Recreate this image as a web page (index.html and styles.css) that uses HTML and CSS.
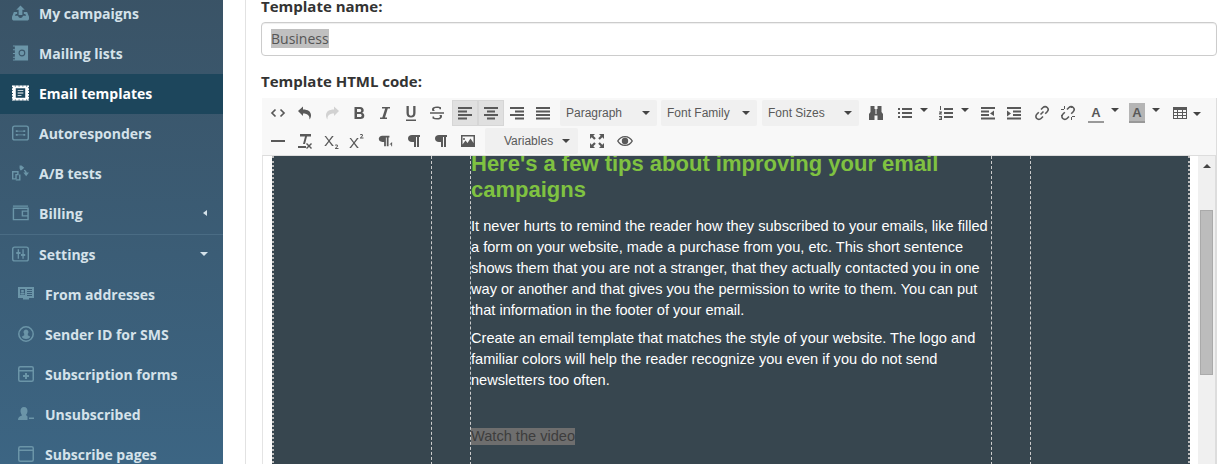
FILE: index.html
```html
<!DOCTYPE html>
<html lang="en">
<head>
<meta charset="utf-8">
<title>Email templates</title>
<link rel="stylesheet" href="styles.css">
</head>
<body>
<div class="page">
  <nav class="sidebar">
    <a class="item"><svg class="ico" viewBox="0 0 18 16"><path d="M9 0l4.500 4.500H11V10H7V4.500H4.500z"/><path d="M2 7h3.500v2H4L3 11h3.500c0 1.200 1 2.200 2.500 2.200s2.500-1 2.500-2.200H15l-1-2h-1.500V7H16l2 5v2c0 1-1 2-2 2H2c-1 0-2-1-2-2v-2z"/></svg><span>My campaigns</span></a>
    <a class="item"><svg class="ico" viewBox="0 0 18 16"><path d="M1 0h16v16H1v-1h2v-2H1v-1h2V9H1V8h2V5H1V4h2V1H1z"/><circle cx="10.500" cy="8" r="3" fill="none" stroke="#3c586b" stroke-width="1.200"/></svg><span>Mailing lists</span></a>
    <a class="item active"><svg class="ico" viewBox="0 0 18 16"><path d="M0 0h18v16H0z"/><path fill="#1d465c" d="M4 3h10v10H4zM0 2h1v1H0zM0 5h1v1H0zM0 8h1v1H0zM0 11h1v1H0zM0 14h1v1H0zM17 2h1v1h-1zM17 5h1v1h-1zM17 8h1v1h-1zM17 11h1v1h-1zM17 14h1v1h-1zM3 0h1v1H3zM7 0h1v1H7zM11 0h1v1h-1zM15 0h1v1h-1zM3 15h1v1H3zM7 15h1v1H7zM11 15h1v1h-1zM15 15h1v1h-1z"/><path d="M6 5h6v1H6zM6 7.500h6v1H6zM6 10h4v1H6z"/></svg><span>Email templates</span></a>
    <a class="item"><svg class="ico" viewBox="0 0 18 16"><rect x=".75" y=".75" width="16.500" height="14.500" rx="2" fill="none" stroke="currentColor" stroke-width="1.500"/><path d="M4 5h2v2H4zM6 5.500h6v1H6zM12 5h2v2h-2zM4 9h2v2H4zM6 9.500h6v1H6zM12 9h2v2h-2z"/></svg><span>Autoresponders</span></a>
    <a class="item"><svg class="ico" viewBox="0 0 18 16"><path fill-rule="evenodd" d="M0 6h7v4.500h-2V15H0zM1.500 7.500V13.500h2V9H5.500V7.500zM6 11h1.500V9.500H9V16H4v-1.500h3.500V11zM8 0h2l3 2.500L10 5H8.500V3.500H8zM13 4.500c1.500.5 2.500 1.500 2.500 3H18l-3 4-3-4h2c0-.8-.5-1.300-1.500-1.500z"/></svg><span>A/B tests</span></a>
    <a class="item"><svg class="ico" viewBox="0 0 18 16"><path fill="none" stroke="currentColor" stroke-width="1.500" d="M17 3H1.500v12h15.500V3zM1 .75h16M17 6h-6v5h6"/></svg><span>Billing</span><i class="caret-left"></i></a>
    <a class="item settings"><svg class="ico" viewBox="0 0 18 16"><rect x=".75" y=".75" width="16.500" height="14.500" rx="2" fill="none" stroke="currentColor" stroke-width="1.500"/><path d="M6 3h1.400v3H9v2H7.400v5H6V8H4.500V6H6zM11 3h1.400v5H14v2h-1.600v3H11v-3H9.500V8H11z"/></svg><span>Settings</span><i class="caret-down"></i></a>
    <a class="item sub"><svg class="ico" viewBox="0 0 16 14"><path d="M0 0h16v11h-5v1.500H5V11H0z"/><path fill="#3b5d77" d="M2 2h5v6H2zM9 2h5v1H9zM9 4h5v1H9zM9 6h5v1H9zM9 8h5v1H9z"/><path d="M3.200 3h2.600v2.500H3.200zM2.500 6h4v1.500h-4z"/></svg><span>From addresses</span></a>
    <a class="item sub"><svg class="ico" viewBox="0 0 16 16"><circle cx="8" cy="8" r="7.200" fill="none" stroke="currentColor" stroke-width="1.500"/><path d="M8 3.500a2.500 2.500 0 0 1 1.800 4.200v1.500l2.500 1.500C11.500 12 10 13 8 13s-3.500-1-4.300-2.300l2.500-1.500V7.700A2.500 2.500 0 0 1 8 3.500z"/></svg><span>Sender ID for SMS</span></a>
    <a class="item sub"><svg class="ico" viewBox="0 0 16 16"><rect x=".75" y=".75" width="14.500" height="14.500" rx="1.500" fill="none" stroke="currentColor" stroke-width="1.500"/><path d="M1 4h14v1.500H1zM7 7h2v2h2v2H9v2H7v-2H5V9h2z"/></svg><span>Subscription forms</span></a>
    <a class="item sub"><svg class="ico" viewBox="0 0 16 16"><path d="M6 1c2.500 0 3.500 2 3.500 4S8.500 8 8 9l1.500 1.500V14H0c0-2.500 1-3.500 4-4.500C3.500 8 2.500 7 2.500 5S3.500 1 6 1zM11 11.500h5V13h-5z"/></svg><span>Unsubscribed</span></a>
    <a class="item sub"><svg class="ico" viewBox="0 0 16 16"><rect x=".75" y=".75" width="14.500" height="14.500" rx="1.500" fill="none" stroke="currentColor" stroke-width="1.500"/><path d="M1 3.500h14V5H1z"/></svg><span>Subscribe pages</span></a>
  </nav>
  <main class="content">
    <label class="field-label">Template name:</label>
    <div class="name-input"><span class="selected">Business</span></div>
    <label class="field-label second">Template HTML code:</label>
    <div class="editor">
      <div class="toolbar">
        <div class="row">
          <button class="b"><svg viewBox="0 0 16 16"><path class="ln" d="M5.500 4.500L2 8l3.500 3.500M10.500 4.500L14 8l-3.500 3.500"/></svg></button>
          <button class="b g1"><svg viewBox="0 0 16 16"><path d="M1 6l5-4.500v3c5 0 8 2 8 6 0 1.500-.7 3-1.500 4 .3-3.500-1.500-6-6.500-6v2.500z"/></svg></button>
          <button class="b g1 off"><svg viewBox="0 0 16 16"><path d="M15 6l-5-4.500v3c-5 0-8 2-8 6 0 1.500.7 3 1.500 4C3.200 11 5 8.500 10 8.500V11z"/></svg></button>
          <button class="b g1"><svg viewBox="0 0 16 16"><path fill-rule="evenodd" d="M3.500 2H9c2.500 0 3.700 1.300 3.700 3.200 0 1.300-.7 2.200-1.700 2.600 1.500.4 2.300 1.500 2.300 3 0 2.200-1.500 3.200-4 3.200H3.500zM6 4v3h2.700C9.700 7 10.200 6.400 10.200 5.500S9.700 4 8.700 4zM6 9v3h3c1.100 0 1.700-.6 1.700-1.500S10.100 9 9 9z"/></svg></button>
          <button class="b"><svg viewBox="0 0 16 16"><path d="M5 2h8v1.500h-2.200L8 12.500h2V14H3v-1.500h2.300L8.200 3.500H5z"/></svg></button>
          <button class="b"><svg viewBox="0 0 16 16"><path d="M3 14.500h10V16H3zM3.500 1h2.300v7c0 1.700.8 2.700 2.200 2.700s2.200-1 2.200-2.700V1h2.300v7c0 3-1.700 4.500-4.500 4.500S3.500 11 3.500 8z"/></svg></button>
          <button class="b"><svg viewBox="0 0 16 16"><path d="M1 7.300h14v1.400H1zM3.500 6c-.3-.5-.5-1-.5-1.700C3 2.500 5 1.500 8 1.500c1.500 0 3 .3 4 .8v2h-1.500l-.2-1C9.700 3 9 3 8 3 6.200 3 5 3.400 5 4.400c0 .7.500 1.200 1.200 1.600zM12.700 10c.2.400.3.800.3 1.400 0 2-2 3.100-5 3.100-1.700 0-3.200-.3-4.500-1v-2H5l.3 1.200c.8.300 1.700.4 2.700.4 1.800 0 3-.5 3-1.600 0-.6-.3-1.100-.8-1.500z"/></svg></button>
          <button class="b on g2"><svg viewBox="0 0 16 16"><path d="M1 2h14v2H1zM1 5.500h9v2H1zM1 9h14v2H1zM1 12.500h9v2H1z"/></svg></button>
          <button class="b on"><svg viewBox="0 0 16 16"><path d="M1 2h14v2H1zM4 5.500h8v2H4zM1 9h14v2H1zM4 12.500h8v2H4z"/></svg></button>
          <button class="b"><svg viewBox="0 0 16 16"><path d="M1 2h14v2H1zM6 5.500h9v2H6zM1 9h14v2H1zM6 12.500h9v2H6z"/></svg></button>
          <button class="b"><svg viewBox="0 0 16 16"><path d="M1 2h14v2H1zM1 5.500h14v2H1zM1 9h14v2H1zM1 12.500h14v2H1z"/></svg></button>
          <button class="sel g4 w97"><span>Paragraph</span><i class="dn"></i></button>
          <button class="sel g4 w96"><span>Font Family</span><i class="dn"></i></button>
          <button class="sel g5 w97"><span>Font Sizes</span><i class="dn"></i></button>
          <button class="b g4"><svg viewBox="0 0 16 16"><path d="M2.500 1H6.500V4H7.500V9H8.500V4H9.500V1h4v6L15 9v6H9.500V10.500h-3V15H1V9l1.500-2z"/></svg></button>
          <button class="b w40 g3"><svg viewBox="0 0 16 16"><path d="M1 3h2v2H1zM5 3h10v2H5zM1 7h2v2H1zM5 7h10v2H5zM1 11h2v2H1zM5 11h10v2H5z"/></svg><i class="up"></i></button>
          <button class="b w40 g1"><svg viewBox="0 0 16 16"><path d="M2 1h1v4H2zM1 6.500h3v1l-1.500 1H4v1H1v-1l1.500-1H1zM1 11h3v4H1v-1h2v-.5H1.500v-1H3V12H1zM6 3h9v2H6zM6 7h9v2H6zM6 11h9v2H6z"/></svg><i class="up"></i></button>
          <button class="b g2"><svg viewBox="0 0 16 16"><path d="M1 2h14v2H1zM1 5.500h8v2H1zM1 9h8v2H1zM1 12.500h14v2H1zM10 8.500l4-3v5.500z"/></svg></button>
          <button class="b"><svg viewBox="0 0 16 16"><path d="M1 2h14v2H1zM7 5.500h8v2H7zM7 9h8v2H7zM1 12.500h14v2H1zM1 5.500l4 3-4 3z"/></svg></button>
          <button class="b g2"><svg viewBox="0 0 16 16"><path class="ln2" d="M6.500 9.500l3-3M7 4.500l2-2c1.200-1.200 3-1.200 4.200 0s1.200 3 0 4.200l-2 2M9 11.500l-2 2c-1.200 1.200-3 1.200-4.200 0s-1.200-3 0-4.200l2-2"/></svg></button>
          <button class="b"><svg viewBox="0 0 16 16"><path class="ln2" d="M7 4.500l2-2c1.200-1.200 3-1.200 4.200 0s1.200 3 0 4.200l-2 2M9 11.500l-2 2c-1.200 1.200-3 1.200-4.200 0s-1.200-3 0-4.200l2-2"/><path d="M1 4h3v1H1zM4 1h1v3H4zM12 15h-1v-3h1zM15 12h-3v-1h3zM11 1h1v2h-1zM1 10h2v1H1z"/></svg></button>
          <button class="b w40 g2"><span class="a">A</span><i class="up"></i></button>
          <button class="b w40 g1"><span class="a hi">A</span><i class="up"></i></button>
          <button class="b w40 g3"><svg viewBox="0 0 16 16"><path fill-rule="evenodd" d="M1 2h14v12H1zM2 5v2h3V5zM6 5v2h4V5zM11 5v2h3V5zM2 8v2h3V8zM6 8v2h4V8zM11 8v2h3V8zM2 11v2h3v-2zM6 11v2h4v-2zM11 11v2h3v-2z"/></svg><i class="dn small"></i></button>
        </div>
        <div class="row">
          <button class="b"><svg viewBox="0 0 16 16"><path d="M1 7h14v2H1z"/></svg></button>
          <button class="b g1"><svg viewBox="0 0 16 16"><path d="M3 1h11v2.500H10L8 11H6l2-7.500H3zM1 13h8v2H1zM10 10l2 2 2-2 1 1-2 2 2 2-1 1-2-2-2 2-1-1 2-2-2-2z"/></svg></button>
          <button class="b g1"><svg viewBox="0 0 16 16"><path d="M2 3l3 4 3-4h1.700L5.800 8l4 5H8L5 9l-3 4H.300l4-5L.500 3zM12 11.500c1 0 2 .4 2 1.300 0 .7-.5 1.100-1.200 1.700l-.5.500H14.500v1H11v-.8l1.500-1.500c.4-.4.5-.6.500-.9 0-.3-.3-.4-.7-.4-.3 0-.7.100-1 .3l-.3-.8c.3-.2.900-.4 1.500-.4z"/></svg></button>
          <button class="b g-1"><svg viewBox="0 0 16 16"><path d="M2 5l3 4 3-4h1.700L5.800 10l4 5H8l-3-4-3 4H.300l4-5L.500 5zM12 1c1 0 2 .4 2 1.300 0 .7-.5 1.100-1.200 1.700l-.5.500H14.500v1H11v-.8l1.500-1.500c.4-.4.500-.6.500-.9 0-.3-.3-.4-.7-.4-.3 0-.7.100-1 .3l-.3-.8c.3-.2.900-.4 1.500-.4z"/></svg></button>
          <button class="b g2"><svg viewBox="0 0 18 16"><path d="M6 2h8v2h-1v10h-2V4h-1v10H8V9H6C3.500 9 2 7.500 2 5.500S3.500 2 6 2zM14 12l3-3v5h-1v-2z"/></svg></button>
          <button class="b g3"><svg viewBox="0 0 16 16"><path d="M6 2h8v2h-1v10h-2V4h-1v10H8V9H6C3.500 9 2 7.500 2 5.500S3.500 2 6 2z"/></svg></button>
          <button class="b"><svg viewBox="0 0 16 16"><path d="M7 2h8v2h-1v10h-2V4h-1v10H9V9H7C4.500 9 3 7.500 3 5.500S4.500 2 7 2z"/></svg></button>
          <button class="b g2"><svg viewBox="0 0 16 16"><path fill-rule="evenodd" d="M1 2h14v12H1zM2.500 3.500v8l3-4 2 2.500 3-4.500 3 4.500v-6.500zM4 5a1 1 0 1 1 0 2 1 1 0 0 1 0-2z"/></svg></button>
          <button class="sel vars g4"><span>Variables</span><i class="dn"></i></button>
          <button class="b g6"><svg viewBox="0 0 16 16"><path d="M1 1h5L4.300 2.700l2.500 2.500-1.600 1.600-2.500-2.500L1 6zM15 1v5l-1.700-1.700-2.500 2.500-1.600-1.600 2.500-2.500L10 1zM1 15v-5l1.700 1.700 2.500-2.500 1.600 1.600-2.500 2.500L6 15zM15 15h-5l1.700-1.700-2.500-2.500 1.600-1.600 2.500 2.500L15 10z"/></svg></button>
          <button class="b g2"><svg viewBox="0 0 16 16"><path fill-rule="evenodd" d="M8 3c3.500 0 6.500 2 8 5-1.500 3-4.500 5-8 5S1.500 11 0 8c1.500-3 4.500-5 8-5zM1.500 8C3 10.200 5.300 11.800 8 11.800S13 10.200 14.500 8C13 5.800 10.700 4.200 8 4.200S3 5.800 1.500 8zM8 4.800a3.200 3.200 0 1 1 0 6.400 3.200 3.200 0 0 1 0-6.400z"/></svg></button>
        </div>
      </div>
      <div class="canvas">
        <div class="doc">
          <div class="col"></div>
          <div class="col"></div>
          <div class="col text">
            <h2>Here's a few tips about improving your email campaigns</h2>
            <p>It never hurts to remind the reader how they subscribed to your emails, like filled a form on your website, made a purchase from you, etc. This short sentence shows them that you are not a stranger, that they actually contacted you in one way or another and that gives you the permission to write to them. You can put that information in the footer of your email.</p>
            <p>Create an email template that matches the style of your website. The logo and familiar colors will help the reader recognize you even if you do not send newsletters too often.</p>
            <p class="video"><span>Watch the video</span></p>
          </div>
          <div class="col"></div>
          <div class="col last"></div>
        </div>
        <div class="scrollbar"><i class="sb-up"></i><div class="thumb"></div></div>
      </div>
    </div>
  </main>
</div>
</body>
</html>
```

FILE: styles.css
```css
* { box-sizing: border-box; }
html, body { margin: 0; height: 464px; overflow: hidden; background: #fff; }
.page { display: flex; height: 464px; overflow: hidden; font-family: "Open Sans", sans-serif; }

.sidebar {
  width: 223px; flex: none; height: 470px; margin-top: -6px;
  background: linear-gradient(#3a5366, #3c6583);
}
.item {
  display: flex; align-items: center; height: 40px; padding-left: 12px;
  color: #d5e2ea; font-size: 14px; font-weight: 700; position: relative;
}
.item span { margin-left: 10px; margin-top: -2px; }
.ico { width: 17px; height: 16px; flex: none; fill: #6b95a8; color: #6b95a8; margin-top: -3px; }
.item.active { background: #1d465c; color: #fff; }
.item.active .ico { fill: #fff; color: #fff; }
.settings { height: 41px; border-top: 1px solid #4a6c84; }
.sub { padding-left: 18px; }
.sub .ico { width: 16px; }
.sub span { margin-left: 11px; }
.caret-left { position: absolute; right: 16px; top: 16px; border: 3.500px solid transparent; border-left: 0; border-right: 4px solid #d5e2ea; }
.caret-down { position: absolute; right: 15px; top: 17px; border: 4px solid transparent; border-bottom: 0; border-top: 4px solid #d5e2ea; }

.content {
  flex: 1; margin-left: 22px; border-left: 1px solid #e2e2e2; padding: 0 2px 0 15px;
  min-width: 0; color: #333;
}
.field-label { display: block; font-size: 15px; font-weight: 700; line-height: 13px; height: 22px; color: #333; }
.name-input {
  height: 34px; border: 1px solid #ccc; border-radius: 4px; padding: 6px 9px;
  font-size: 14px; line-height: 20px; color: #555; box-shadow: inset 0 1px 1px rgba(0,0,0,.07);
}
.selected { background: #c0c0c0; display: inline-block; height: 19px; line-height: 19px; }
.field-label.second { height: 20px; line-height: 20px; margin: 15px 0 7px; }

.editor { margin-left: 1px; border-right: 1px solid #ddd; }
.toolbar { height: 58px; background: #f8f8f8; padding: 2px 0 0 3px; display: flex; flex-direction: column; gap: 2px; }
.row { display: flex; height: 26px; }
button {
  appearance: none; border: 0; background: transparent; padding: 0; margin: 0;
  font-family: "Liberation Sans", sans-serif; color: #595959; flex: none;
}
.b { width: 26px; height: 26px; display: flex; align-items: center; justify-content: center; position: relative; }
.b svg { width: 16px; height: 16px; fill: #595959; flex: none; }
.b .ln { fill: none; stroke: #595959; stroke-width: 1.700; }
.b .ln2 { fill: none; stroke: #595959; stroke-width: 1.600; }
.off svg { fill: #d2d2d2; }
.on { background: #e0e0e0; box-shadow: inset 0 0 0 1px #d6d6d6; }
.g1 { margin-left: 1px; }
.g2 { margin-left: 2px; }
.g3 { margin-left: 3px; }
.g4 { margin-left: 4px; }
.g5 { margin-left: 5px; }
.g6 { margin-left: 6px; }
.g-1 { margin-left: -1px; }
.sel {
  height: 26px; background: #f0f0f0; border-radius: 2px; display: flex; align-items: center;
  justify-content: space-between; padding: 0 7px 0 6px; font-size: 12px;
}
.w97 { width: 97px; }
.w96 { width: 96px; }
.b.w40 { width: 40px; justify-content: flex-start; padding-left: 5px; }
.dn { display: block; border: 4px solid transparent; border-bottom: 0; border-top: 4px solid #444; }
.up { position: absolute; right: 4px; top: 8px; border: 4px solid transparent; border-bottom: 0; border-top: 4px solid #444; }
.dn.small { position: absolute; right: 6px; top: 12px; }
.vars { width: 93px; padding: 0 8px 0 19px; }
.a { display: block; width: 16px; height: 20px; border-bottom: 2px solid #999; font: 700 13px/19px "Liberation Sans", sans-serif; text-align: center; color: #595959; }
.a.hi { background: #b5b5b5; }

.canvas { height: 320px; display: flex; background: #fff; border-left: 1px solid #e4e4e4; border-top: 1px solid #ddd; padding-left: 9px; overflow: hidden; margin-top: -1px; }
.doc {
  display: grid; grid-template-columns: 158px 39px 521px 39px 157px; width: 918px; height: 100%;
  background: #37464f; border-left: 2px dotted #bbb; border-right: 2px dotted #bbb; flex: none;
}
.col { border-right: 1px dashed #ccc; }
.col.last { border-right: 0; }
.col.text { color: #fff; font: 14.6px/21px "Liberation Sans", sans-serif; overflow: hidden; }
h2 { margin: -5px 0 13px; font: 700 22px/26px "Liberation Sans", sans-serif; color: #7fc241; }
p { margin: 0 0 7px; }
.video { margin-top: 35px; }
.video span { background: #6e6e6e; color: #3d3d3d; display: inline-block; height: 17px; line-height: 17px; }

.scrollbar { flex: none; width: 18px; margin-left: 8px; background: #f0f0f0; position: relative; border-right: 1px solid #ddd; }
.sb-up { position: absolute; left: 5px; top: 8px; border: 4px solid transparent; border-top: 0; border-bottom: 4px solid #444; }
.thumb { position: absolute; left: 2px; top: 54px; width: 13px; height: 165px; background: #bcbcbc; border: 1px solid #aaa; }
```
